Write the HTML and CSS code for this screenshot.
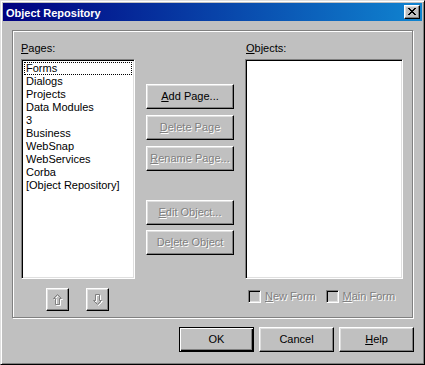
FILE: index.html
```html
<!DOCTYPE html>
<html>
<head>
<meta charset="utf-8">
<link rel="stylesheet" href="styles.css">
</head>
<body>
<div class="window">
  <div class="titlebar">
    <span class="title">Object Repository</span>
    <div class="close">
      <svg width="8" height="7" viewBox="0 0 8 7" shape-rendering="crispEdges"><path fill="#000" d="M0 0h2v1h-2z M6 0h2v1h-2z M1 1h2v1h-2z M5 1h2v1h-2z M2 2h4v1h-4z M3 3h2v1h-2z M2 4h4v1h-4z M1 5h2v1h-2z M5 5h2v1h-2z M0 6h2v1h-2z M6 6h2v1h-2z"/></svg>
    </div>
  </div>
  <div class="client">
    <div class="group">
      <div class="col pages-col">
        <div class="label"><u>P</u>ages:</div>
        <div class="listbox pages">
          <div class="item focus">Forms</div>
          <div class="item">Dialogs</div>
          <div class="item">Projects</div>
          <div class="item">Data Modules</div>
          <div class="item">3</div>
          <div class="item">Business</div>
          <div class="item">WebSnap</div>
          <div class="item">WebServices</div>
          <div class="item">Corba</div>
          <div class="item">[Object Repository]</div>
        </div>
        <div class="arrows">
          <div class="btn small">
            <svg width="11" height="12" viewBox="0 0 11 12"><polygon points="5.5,1.5 9.5,5.5 7.5,5.5 7.5,11.5 3.5,11.5 3.5,5.5 1.5,5.5" fill="none" stroke="#fff"/><polygon points="4.5,0.5 8.5,4.5 6.5,4.5 6.5,10.5 2.5,10.5 2.5,4.5 0.5,4.5" fill="none" stroke="#808080"/></svg>
          </div>
          <div class="btn small">
            <svg width="11" height="12" viewBox="0 0 11 12"><polygon points="3.5,1.5 7.5,1.5 7.5,7.5 9.5,7.5 5.5,11.5 1.5,7.5 3.5,7.5" fill="none" stroke="#fff"/><polygon points="2.5,0.5 6.5,0.5 6.5,6.5 8.5,6.5 4.5,10.5 0.5,6.5 2.5,6.5" fill="none" stroke="#808080"/></svg>
          </div>
        </div>
      </div>
      <div class="col btn-col">
        <div class="btn first"><span><u>A</u>dd Page...</span></div>
        <div class="btn disabled gap6"><span><u>D</u>elete Page</span></div>
        <div class="btn disabled gap6"><span><u>R</u>ename Page...</span></div>
        <div class="btn disabled gap-big"><span><u>E</u>dit Object...</span></div>
        <div class="btn disabled gap5"><span>De<u>l</u>ete Object</span></div>
      </div>
      <div class="col obj-col">
        <div class="label obj-label"><u>O</u>bjects:</div>
        <div class="listbox objects"></div>
        <div class="checks">
          <div class="check"><span class="box"></span><span class="dis-text"><u>N</u>ew Form</span></div>
          <div class="check"><span class="box"></span><span class="dis-text"><u>M</u>ain Form</span></div>
        </div>
      </div>
    </div>
    <div class="bottom">
      <div class="btn wide default"><span>OK</span></div>
      <div class="btn wide"><span>Cancel</span></div>
      <div class="btn wide"><span><u>H</u>elp</span></div>
    </div>
  </div>
</div>
</body>
</html>
```

FILE: styles.css
```css
* { box-sizing: border-box; }
html, body { margin: 0; padding: 0; background: #c0c0c0; }
body {
  font-family: "Liberation Sans", Arial, sans-serif;
  font-size: 11px;
  color: #000;
}
u { text-decoration: underline; text-underline-offset: 1px; }

.window {
  width: 425px;
  height: 365px;
  background: #c0c0c0;
  border: 1px solid;
  border-color: #dfdfdf #000 #000 #dfdfdf;
  box-shadow: inset 1px 1px 0 #fff, inset -1px -1px 0 #808080;
  padding: 2px;
  display: flex;
  flex-direction: column;
}

.titlebar {
  height: 18px;
  flex: none;
  background: linear-gradient(to right, #000080, #1084d0);
  display: flex;
  align-items: center;
  justify-content: space-between;
  padding: 0 2px 0 3px;
}
.title {
  color: #fff;
  font-weight: bold;
  font-size: 11px;
  line-height: 18px;
  padding-top: 1px;
}
.close {
  width: 16px;
  height: 14px;
  background: #c0c0c0;
  border: 1px solid;
  border-color: #fff #000 #000 #fff;
  box-shadow: inset -1px -1px 0 #808080, inset 1px 1px 0 #dfdfdf;
  display: flex;
  align-items: flex-start;
  justify-content: center;
  padding-top: 2px;
  padding-right: 1px;
}
.close svg { display: block; }

.client {
  padding: 9px 9px 0 9px;
  display: flex;
  flex-direction: column;
}

.group {
  height: 288px;
  border: 1px solid #808080;
  box-shadow: 1px 1px 0 #fff, inset 1px 1px 0 #fff;
  padding: 11px 0 0 8px;
  display: flex;
  gap: 11px;
}

.col { display: flex; flex-direction: column; }
.pages-col { width: 114px; }
.btn-col { width: 88px; }
.obj-col { width: 158px; }

.label {
  line-height: 13px;
  height: 13px;
  margin-bottom: 4px;
}
.obj-label { padding-left: 1px; }

.listbox {
  height: 220px;
  background: #fff;
  border: 1px solid;
  border-color: #808080 #fff #fff #808080;
  box-shadow: inset 1px 1px 0 #000, inset -1px -1px 0 #dfdfdf;
  padding: 2px;
}
.item {
  height: 13px;
  line-height: 13px;
  padding-left: 2px;
  white-space: nowrap;
}
.item.focus {
  outline: 1px dotted #000;
  outline-offset: -1px;
}

.arrows {
  display: flex;
  gap: 17px;
  padding-left: 25px;
  margin-top: 9px;
}

.btn {
  height: 25px;
  background: #c0c0c0;
  border: 1px solid;
  border-color: #fff #000 #000 #fff;
  box-shadow: inset -1px -1px 0 #808080, inset 1px 1px 0 #dfdfdf;
  display: flex;
  align-items: center;
  justify-content: center;
  white-space: nowrap;
  line-height: 13px;
}
.btn span { padding-bottom: 1px; }
.btn.small { width: 23px; height: 23px; }
.btn.small svg { display: block; margin-left: 1px; }
.btn.disabled { color: #808080; text-shadow: 1px 1px 0 #fff; }
.btn.first { margin-top: 42px; }
.btn.gap6 { margin-top: 6px; }
.btn.gap-big { margin-top: 29px; }
.btn.gap5 { margin-top: 5px; }

.checks {
  display: flex;
  margin-top: 11px;
  padding-left: 3px;
}
.check {
  width: 81px;
  display: flex;
  align-items: center;
  gap: 4px;
  height: 13px;
}
.box {
  width: 13px;
  height: 13px;
  flex: none;
  background: #c0c0c0;
  border: 1px solid;
  border-color: #808080 #fff #fff #808080;
  box-shadow: inset 1px 1px 0 #000, inset -1px -1px 0 #dfdfdf;
}
.dis-text {
  color: #808080;
  text-shadow: 1px 1px 0 #fff;
  line-height: 13px;
  white-space: nowrap;
}

.bottom {
  display: flex;
  justify-content: flex-end;
  gap: 5px;
  margin-top: 9px;
  margin-right: -1px;
}
.btn.wide { width: 75px; }
.btn.default {
  border: 1px solid #000;
  box-shadow: inset 1px 1px 0 #fff, inset -1px -1px 0 #000, inset -2px -2px 0 #808080;
}
```
